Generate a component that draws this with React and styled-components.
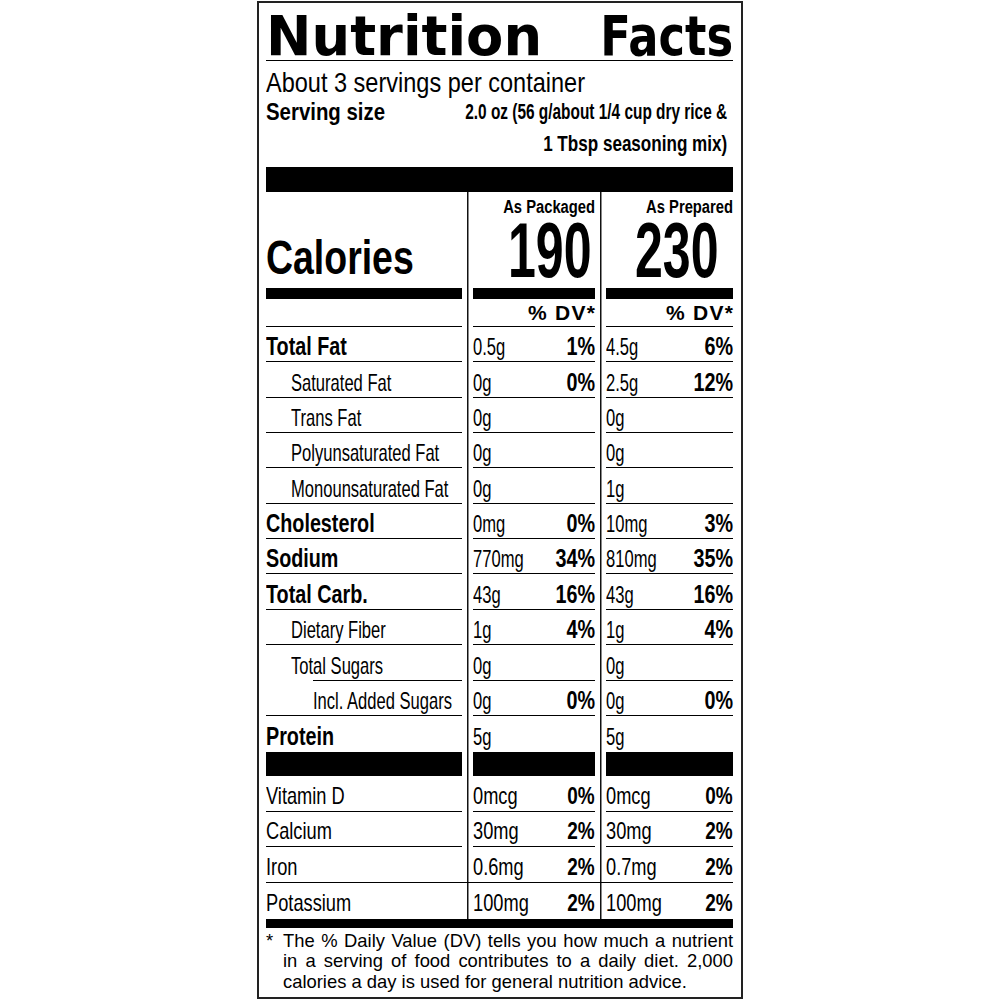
import React from 'react';
import styled, { createGlobalStyle } from 'styled-components';

const SANS = `"Liberation Sans", Arial, sans-serif`;

const GlobalStyle = createGlobalStyle`
  html, body {
    margin: 0;
    padding: 0;
    background: #fff;
  }
  body {
    font-family: ${SANS};
    color: #000;
  }
`;

const Page = styled.div`
  display: flex;
  justify-content: center;
  padding-top: 1px;
`;

const Panel = styled.section`
  width: 486px;
  height: 998px;
  box-sizing: border-box;
  border: 2px solid #222;
  padding: 0 8px 0 7px;
  display: flex;
  flex-direction: column;
  overflow: hidden;
`;

const Title = styled.h1`
  margin: 0;
  height: 57px;
  border-bottom: 1px solid #000;
  display: flex;
  justify-content: space-between;
  align-items: flex-start;
  font-family: "DejaVu Sans", sans-serif;
  font-weight: 700;
  font-size: 56px;
  line-height: 66px;
  white-space: nowrap;
`;

const Word = styled.span`
  display: inline-block;
  transform: scaleX(${p => p.$sx});
  transform-origin: ${p => p.$origin} center;
`;

const Servings = styled.p`
  margin: 0;
  padding-top: 8px;
  font-size: 28px;
  line-height: 27px;
  white-space: nowrap;
  transform: scaleX(0.84);
  transform-origin: left center;
`;

const ServingSize = styled.div`
  display: flex;
  justify-content: space-between;
  align-items: flex-start;
  font-weight: 700;
  line-height: 32px;
  white-space: nowrap;
  margin-bottom: 7px;
`;

const ServingLabel = styled.span`
  display: inline-block;
  min-width: 0;
  font-size: 24px;
  transform: scaleX(0.85);
  transform-origin: left center;
`;

const ServingAmount = styled.div`
  display: flex;
  flex-direction: column;
  align-items: flex-end;
  flex: none;
  margin-right: 6px;
  font-size: 22px;
`;

const AmountLine = styled.span`
  display: inline-block;
  transform: scaleX(${p => p.$sx});
  transform-origin: right center;
`;

const Bar = styled.div`
  height: ${p => p.$h}px;
  background: #000;
  flex: none;
`;

const Grid = styled.div`
  display: grid;
  grid-template-columns: 196px 11px 122px 11px 127px;
  height: ${p => p.$h}px;
  flex: none;
`;

const rule = (from = 0) =>
  `linear-gradient(#000, #000) no-repeat right bottom / calc(100% - ${from}px) 1px`;

const Divider = styled.div`
  background: ${p => (p.$rule ? `${rule()}, ` : '')}
    linear-gradient(#111, #111) no-repeat center / 1.5px 100%;
`;

const Cell = styled.div`
  display: flex;
  align-items: flex-end;
  justify-content: space-between;
  min-width: 0;
  box-sizing: border-box;
  padding-left: ${p => p.$indent || 0}px;
  padding-bottom: ${p => p.$pb ?? 3}px;
  background: ${p => (p.$rule ? rule(p.$ruleFrom) : 'none')};
  white-space: nowrap;
`;

const BlackCell = styled.div`
  background: #000;
`;

const HeadCell = styled.div`
  display: flex;
  flex-direction: column;
  align-items: flex-end;
  justify-content: space-between;
  padding-top: 6px;
`;

const Txt = styled.span`
  display: inline-block;
  white-space: nowrap;
  min-width: 0;
  flex-shrink: ${p => (p.$right ? 0 : 1)};
  font-size: ${p => p.$size}px;
  font-weight: ${p => (p.$bold ? 700 : 400)};
  line-height: 1;
  transform: scaleX(${p => p.$sx ?? 1});
  transform-origin: ${p => (p.$right ? 'right' : 'left')} bottom;
`;

const BigNumber = styled(Txt)`
  line-height: 0.8;
  margin-bottom: 6px;
  margin-right: ${p => p.$inset || 0}px;
`;

const Dv = styled.span`
  font-weight: 700;
  font-size: 21px;
  line-height: 1;
  letter-spacing: 1.3px;
  margin-right: -1.3px;
`;

const Footnote = styled.div`
  display: flex;
  padding-top: 3px;
  font-size: 18.4px;
  line-height: 20.3px;
`;

const Star = styled.span`
  flex: none;
  width: 17px;
`;

const Note = styled.p`
  margin: 0;
  flex: 1;
  text-align: justify;
`;

const nutrients = [
  { label: 'Total Fat', bold: true, h: 35, a: ['0.5g', '1%'], b: ['4.5g', '6%'] },
  { label: 'Saturated Fat', indent: 25, h: 36, a: ['0g', '0%'], b: ['2.5g', '12%'] },
  { label: 'Trans Fat', indent: 25, h: 35, a: ['0g'], b: ['0g'] },
  { label: 'Polyunsaturated Fat', indent: 25, h: 35, a: ['0g'], b: ['0g'] },
  { label: 'Monounsaturated Fat', indent: 25, h: 36, a: ['0g'], b: ['1g'] },
  { label: 'Cholesterol', bold: true, h: 35, a: ['0mg', '0%'], b: ['10mg', '3%'] },
  { label: 'Sodium', bold: true, h: 35, a: ['770mg', '34%'], b: ['810mg', '35%'] },
  { label: 'Total Carb.', bold: true, h: 36, a: ['43g', '16%'], b: ['43g', '16%'] },
  { label: 'Dietary Fiber', indent: 25, h: 35, a: ['1g', '4%'], b: ['1g', '4%'] },
  { label: 'Total Sugars', indent: 25, h: 36, ruleFrom: 47, a: ['0g'], b: ['0g'] },
  { label: 'Incl. Added Sugars', indent: 47, h: 35, a: ['0g', '0%'], b: ['0g', '0%'] },
  { label: 'Protein', bold: true, h: 36, noRule: true, a: ['5g'], b: ['5g'] },
];

const vitamins = [
  { label: 'Vitamin D', h: 36, a: ['0mcg', '0%'], b: ['0mcg', '0%'] },
  { label: 'Calcium', h: 35, a: ['30mg', '2%'], b: ['30mg', '2%'] },
  { label: 'Iron', h: 36, full: true, a: ['0.6mg', '2%'], b: ['0.7mg', '2%'] },
  { label: 'Potassium', h: 36, noRule: true, a: ['100mg', '2%'], b: ['100mg', '2%'] },
];

const Values = ({ pair, rule, sx, pctSize, pb }) => (
  <Cell $rule={rule} $pb={pb}>
    <Txt $size={24} $sx={sx}>{pair[0]}</Txt>
    {pair[1] && (
      <Txt $size={pctSize} $bold $sx={0.79} $right>
        {pair[1]}
      </Txt>
    )}
  </Cell>
);

const NutrientRow = ({ row }) => {
  const hasRule = !row.noRule;
  return (
    <Grid $h={row.h}>
      <Cell $indent={row.indent} $rule={hasRule} $ruleFrom={row.ruleFrom}>
        {row.bold ? (
          <Txt $size={25} $bold $sx={0.79}>{row.label}</Txt>
        ) : (
          <Txt $size={24} $sx={0.69}>{row.label}</Txt>
        )}
      </Cell>
      <Divider />
      <Values pair={row.a} rule={hasRule} sx={0.69} pctSize={25} />
      <Divider />
      <Values pair={row.b} rule={hasRule} sx={0.69} pctSize={25} />
    </Grid>
  );
};

const VitaminRow = ({ row }) => {
  const hasRule = !row.noRule;
  return (
    <Grid $h={row.h}>
      <Cell $rule={hasRule} $pb={4}>
        <Txt $size={24} $sx={0.76}>{row.label}</Txt>
      </Cell>
      <Divider $rule={row.full} />
      <Values pair={row.a} rule={hasRule} sx={0.76} pctSize={24} pb={4} />
      <Divider $rule={row.full} />
      <Values pair={row.b} rule={hasRule} sx={0.76} pctSize={24} pb={4} />
    </Grid>
  );
};

const BarRow = ({ h }) => (
  <Grid $h={h}>
    <BlackCell />
    <Divider />
    <BlackCell />
    <Divider />
    <BlackCell />
  </Grid>
);

export default function App() {
  return (
    <>
      <GlobalStyle />
      <Page>
        <Panel>
          <Title>
            <Word $sx={0.97} $origin="left">Nutrition</Word>
            <Word $sx={0.8} $origin="right">Facts</Word>
          </Title>
          <Servings>About 3 servings per container</Servings>
          <ServingSize>
            <ServingLabel>Serving size</ServingLabel>
            <ServingAmount>
              <AmountLine $sx={0.7}>2.0 oz (56 g/about 1/4 cup dry rice &amp;</AmountLine>
              <AmountLine $sx={0.776}>1 Tbsp seasoning mix)</AmountLine>
            </ServingAmount>
          </ServingSize>
          <Bar $h={25} />

          <Grid $h={96}>
            <Cell $pb={5.6}>
              <Txt $size={48} $bold $sx={0.78}>Calories</Txt>
            </Cell>
            <Divider />
            <HeadCell>
              <Txt $size={18} $bold $sx={0.82} $right>As Packaged</Txt>
              <BigNumber $size={77} $bold $sx={0.65} $right $inset={4}>190</BigNumber>
            </HeadCell>
            <Divider />
            <HeadCell>
              <Txt $size={18} $bold $sx={0.82} $right>As Prepared</Txt>
              <BigNumber $size={77} $bold $sx={0.65} $right $inset={15}>230</BigNumber>
            </HeadCell>
          </Grid>
          <BarRow h={11} />
          <Grid $h={28}>
            <Cell $rule />
            <Divider />
            <Cell $rule $pb={3.8}>
              <span />
              <Dv>% DV*</Dv>
            </Cell>
            <Divider />
            <Cell $rule $pb={3.8}>
              <span />
              <Dv>% DV*</Dv>
            </Cell>
          </Grid>

          {nutrients.map(row => (
            <NutrientRow key={row.label} row={row} />
          ))}

          <BarRow h={24} />

          {vitamins.map(row => (
            <VitaminRow key={row.label} row={row} />
          ))}

          <Bar $h={9} />
          <Footnote>
            <Star>*</Star>
            <Note>
              The % Daily Value (DV) tells you how much a nutrient in a serving of food
              contributes to a daily diet. 2,000 calories a day is used for general
              nutrition advice.
            </Note>
          </Footnote>
        </Panel>
      </Page>
    </>
  );
}
